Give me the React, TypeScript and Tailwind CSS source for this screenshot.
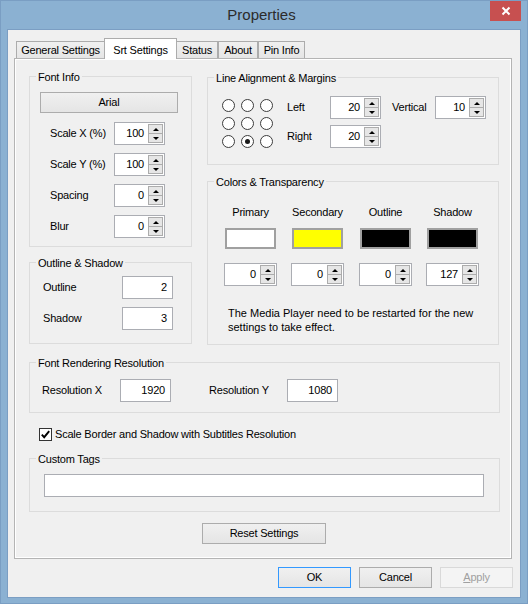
import React from "react";

function Arrow({ up }: { up?: boolean }) {
  return up ? (
    <span className="h-0 w-0 border-x-[3px] border-b-[3px] border-x-transparent border-b-black" />
  ) : (
    <span className="h-0 w-0 border-x-[3px] border-t-[3px] border-x-transparent border-t-black" />
  );
}

function Spin({ value, className = "" }: { value: string; className?: string }) {
  return (
    <div className={`flex h-[23px] border border-[#abadb3] bg-white ${className}`}>
      <div className="flex flex-1 items-center justify-end pr-[4px]">{value}</div>
      <div className="my-[1px] mr-[1px] flex w-[15px] flex-col">
        <div className="flex h-[10px] items-center justify-center border border-[#acacac] bg-[#e6e6e6]">
          <Arrow up />
        </div>
        <div className="flex flex-1 items-center justify-center border border-t-0 border-[#acacac] bg-[#e6e6e6]">
          <Arrow />
        </div>
      </div>
    </div>
  );
}

function Field({ value, className = "" }: { value?: string; className?: string }) {
  return (
    <div className={`flex h-[23px] items-center justify-end border border-[#abadb3] bg-white pr-[5px] ${className}`}>
      {value}
    </div>
  );
}

function Button({ children, className = "" }: { children: React.ReactNode; className?: string }) {
  return (
    <div
      className={`flex h-[21px] items-center justify-center border bg-linear-to-b from-[#f0f0f0] to-[#e5e5e5] ${className}`}
    >
      {children}
    </div>
  );
}

function Group({
  title,
  className,
  children,
}: {
  title: string;
  className: string;
  children: React.ReactNode;
}) {
  return (
    <fieldset className={`border border-[#dcdcdc] ${className}`}>
      <legend className="ml-[6px] px-[2px] pt-[2px] leading-[14px]">{title}</legend>
      {children}
    </fieldset>
  );
}

function Radio({ checked }: { checked?: boolean }) {
  return (
    <div className="flex h-[13px] w-[13px] items-center justify-center rounded-full border border-[#3c3c3c] bg-white">
      {checked && <div className="h-[5px] w-[5px] rounded-full bg-[#1a1a1a]" />}
    </div>
  );
}

function SpinRow({ label, value }: { label: string; value: string }) {
  return (
    <div className="flex h-[23px] items-center">
      <div className="ml-[20px] w-[64px]">{label}</div>
      <Spin value={value} className="w-[51px]" />
    </div>
  );
}

const colors = [
  { name: "Primary", swatch: "bg-white", value: "0", ml: "ml-[16px]" },
  { name: "Secondary", swatch: "bg-[#ffff00]", value: "0", ml: "ml-[14px]" },
  { name: "Outline", swatch: "bg-black", value: "0", ml: "ml-[15px]" },
  { name: "Shadow", swatch: "bg-black", value: "127", ml: "ml-[14px]" },
];

export default function App() {
  return (
    <div className="h-[604px] w-[528px] overflow-hidden border border-[#7a9ec3] bg-[#8bb1d2] font-['Liberation_Sans',Arial,sans-serif] text-[11px] tracking-[-0.2px] text-black">
      {/* title bar */}
      <div className="relative h-[28px]">
        <div className="pr-[5px] pt-[5px] text-center text-[15px] leading-[18px] tracking-normal text-[#2b2b2b]">
          Properties
        </div>
        <div className="absolute right-[6px] top-[-1px] flex h-[21px] w-[31px] items-center justify-center bg-[#c75050]">
          <svg width="10" height="10" viewBox="0 0 10 10">
            <path d="M1.5 1.5 L8.5 8.5 M8.5 1.5 L1.5 8.5" stroke="#fff" strokeWidth="2" />
          </svg>
        </div>
      </div>

      {/* client */}
      <div className="ml-[6px] h-[569px] w-[514px] border border-[#7b9ec3] bg-[#f0f0f0]">
        {/* tabs */}
        <div className="ml-[8px] flex h-[28px] items-end pt-[8px]">
          <div className="flex h-[17px] w-[89px] items-center justify-center border border-b-0 border-[#acacac] bg-linear-to-b from-[#f0f0f0] to-[#e5e5e5]">
            General Settings
          </div>
          <div className="relative z-10 -mb-[1px] -ml-[1px] flex h-[21px] w-[73px] items-start justify-center border border-b-0 border-[#acacac] bg-white pt-[3px]">
            Srt Settings
          </div>
          <div className="-ml-[1px] flex h-[17px] w-[42px] items-center justify-center border border-b-0 border-[#acacac] bg-linear-to-b from-[#f0f0f0] to-[#e5e5e5]">
            Status
          </div>
          <div className="flex h-[17px] w-[40px] items-center justify-center border border-b-0 border-[#acacac] bg-linear-to-b from-[#f0f0f0] to-[#e5e5e5]">
            About
          </div>
          <div className="flex h-[17px] w-[47px] items-center justify-center border border-b-0 border-[#acacac] bg-linear-to-b from-[#f0f0f0] to-[#e5e5e5]">
            Pin Info
          </div>
        </div>

        {/* panel */}
        <div className="ml-[6px] h-[501px] w-[498px] border border-[#b4b4b4] bg-[#f0f0f0] pl-[14px] pt-[9px] shadow-[inset_1px_1px_0_#fff,inset_-1px_-1px_0_#fff]">
          <div className="flex">
            {/* left column */}
            <div className="flex w-[163px] flex-col">
              <Group title="Font Info" className="h-[179px]">
                <Button className="ml-[10px] mt-[8px] w-[138px] border-[#acacac]">Arial</Button>
                <div className="mt-[9px] flex flex-col gap-[8px]">
                  <SpinRow label="Scale X (%)" value="100" />
                  <SpinRow label="Scale Y (%)" value="100" />
                  <SpinRow label="Spacing" value="0" />
                  <SpinRow label="Blur" value="0" />
                </div>
              </Group>
              <Group title="Outline & Shadow" className="mt-[7px] h-[90px]">
                <div className="mt-[6px] flex flex-col gap-[8px]">
                  <div className="flex items-center">
                    <div className="ml-[13px] w-[79px]">Outline</div>
                    <Field value="2" className="w-[51px]" />
                  </div>
                  <div className="flex items-center">
                    <div className="ml-[13px] w-[79px]">Shadow</div>
                    <Field value="3" className="w-[51px]" />
                  </div>
                </div>
              </Group>
            </div>

            {/* right column */}
            <div className="ml-[15px] mt-[1px] flex w-[292px] flex-col">
              <Group title="Line Alignment & Margins" className="h-[96px]">
                <div className="flex items-start">
                  <div className="ml-[14px] mt-[14px] grid grid-cols-3 gap-x-[6px] gap-y-[5px]">
                    <Radio />
                    <Radio />
                    <Radio />
                    <Radio />
                    <Radio />
                    <Radio />
                    <Radio />
                    <Radio checked />
                    <Radio />
                  </div>
                  <div className="ml-[14px] mt-[11px] flex flex-col gap-[6px]">
                    <div className="flex items-center">
                      <div className="w-[43px]">Left</div>
                      <Spin value="20" className="w-[51px]" />
                    </div>
                    <div className="flex items-center">
                      <div className="w-[43px]">Right</div>
                      <Spin value="20" className="w-[51px]" />
                    </div>
                  </div>
                  <div className="ml-[11px] mt-[11px] flex items-center">
                    <div className="w-[43px]">Vertical</div>
                    <Spin value="10" className="w-[51px]" />
                  </div>
                </div>
              </Group>

              <Group title="Colors & Transparency" className="mt-[8px] h-[172px]">
                <div className="mt-[17px] flex">
                  {colors.map((c) => (
                    <div key={c.name} className={`flex w-[53px] flex-col items-center ${c.ml}`}>
                      <div className="leading-[13px]">{c.name}</div>
                      <div className={`mt-[9px] h-[21px] w-[51px] border-2 border-[#a0a0a0] ${c.swatch}`} />
                      <Spin value={c.value} className="mt-[14px] w-[53px]" />
                    </div>
                  ))}
                </div>
                <div className="ml-[20px] mt-[21px] leading-[13.5px] tracking-normal">
                  The Media Player need to be restarted for the new
                  <br />
                  settings to take effect.
                </div>
              </Group>
            </div>
          </div>

          <Group title="Font Rendering Resolution" className="mt-[9px] h-[59px] w-[471px]">
            <div className="mt-[9px] flex items-center">
              <div className="ml-[12px] w-[78px]">Resolution X</div>
              <Field value="1920" className="w-[51px]" />
              <div className="ml-[38px] w-[78px]">Resolution Y</div>
              <Field value="1080" className="w-[51px]" />
            </div>
          </Group>

          <div className="ml-[10px] mt-[15px] flex h-[13px] items-center">
            <div className="flex h-[13px] w-[13px] items-center justify-center border border-[#333] bg-white">
              <svg width="11" height="11" viewBox="0 0 11 11">
                <path d="M1.8 5.6 L4.2 8.2 L9.2 2.2" fill="none" stroke="#000" strokeWidth="1.9" />
              </svg>
            </div>
            <div className="ml-[3px]">Scale Border and Shadow with Subtitles Resolution</div>
          </div>

          <Group title="Custom Tags" className="mt-[9px] h-[62px] w-[471px]">
            <Field className="ml-[14px] mt-[8px] w-[440px]" />
          </Group>

          <Button className="ml-[173px] mt-[11px] w-[124px] border-[#acacac]">Reset Settings</Button>
        </div>

        {/* dialog buttons */}
        <div className="mt-[8px] flex justify-end gap-[8px] pr-[7px]">
          <Button className="w-[73px] border-[#3399ff]">OK</Button>
          <Button className="w-[73px] border-[#acacac]">Cancel</Button>
          <div className="flex h-[21px] w-[73px] items-center justify-center border border-[#d9d9d9] bg-[#f4f4f4] text-[#a0a0a0]">
            <span className="underline">A</span>pply
          </div>
        </div>
      </div>
    </div>
  );
}
